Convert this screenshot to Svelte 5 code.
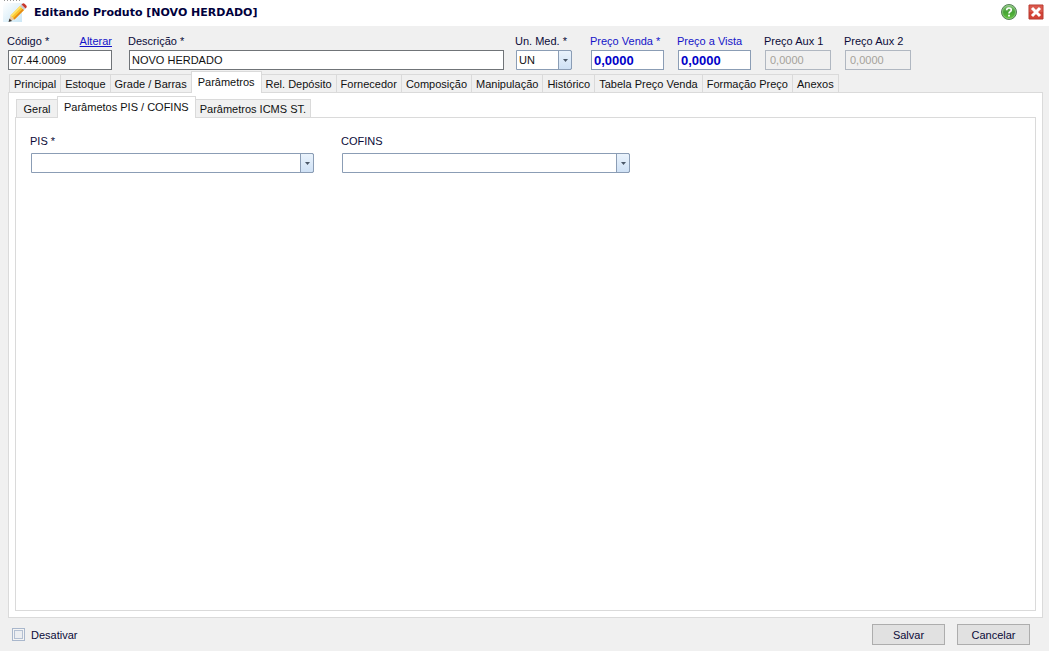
<script>
	const tabs = [
		"Principal",
		"Estoque",
		"Grade / Barras",
		"Parâmetros",
		"Rel. Depósito",
		"Fornecedor",
		"Composição",
		"Manipulação",
		"Histórico",
		"Tabela Preço Venda",
		"Formação Preço",
		"Anexos"
	];
	const subTabs = ["Geral", "Parâmetos PIS / COFINS", "Parâmetros ICMS ST."];

	let activeTab = $state("Parâmetros");
	let activeSubTab = $state("Parâmetos PIS / COFINS");
	let code = $state("07.44.0009");
	let description = $state("NOVO HERDADO");
	let unit = $state("UN");
	let salePrice = $state("0,0000");
	let cashPrice = $state("0,0000");
	let disabled = $state(false);
</script>

{#snippet tabList(items, active, select, label)}
	<div class="tabs" role="tablist" aria-label={label}>
		{#each items as item}
			<button
				type="button"
				role="tab"
				class="tab"
				class:active={item === active}
				aria-selected={item === active}
				onclick={() => select(item)}
			>{item}</button>
		{/each}
	</div>
{/snippet}

{#snippet arrow()}
	<span class="arrow" aria-hidden="true">
		<svg width="5" height="3" viewBox="0 0 5 3"><path d="M0 0h5L2.5 3z" fill="#4b5868" /></svg>
	</span>
{/snippet}

<form class="window" onsubmit={(event) => event.preventDefault()}>
	<header class="titlebar">
		<svg class="pencil" width="24" height="24" viewBox="0 0 24 24" aria-hidden="true">
			<defs>
				<linearGradient id="sky" x1="0" y1="0" x2="1" y2="1">
					<stop offset="0" stop-color="#fff" />
					<stop offset="0.5" stop-color="#e3f2fa" />
					<stop offset="1" stop-color="#cce7f5" />
				</linearGradient>
			</defs>
			<path d="M0 3h19v19H0z" fill="url(#sky)" />
			<path d="M1 .5h16" stroke="#999" stroke-dasharray="1 2" />
			<path d="M6 21.500L7.500 15.500 11.500 19.500z" fill="#edc9a0" />
			<path d="M5.500 22L6.500 18.500 9 21z" fill="#3c3835" />
			<path d="M7.500 15.500L17 6l4 4-9.500 9.500z" fill="#fcc62b" />
			<path d="M7.500 15.500L17 6l1.300 1.300-9.500 9.500z" fill="#ffe26b" />
			<path d="M10.300 18.300L19.800 8.800 21 10l-9.500 9.500z" fill="#e58a16" />
			<path d="M17 6l1.500-1.500 4 4L21 10z" fill="#c6cbd0" />
			<path d="M18.500 4.500l.8-.8q1.200-1 2.500.2l1.300 1.300q1.200 1.300.2 2.500l-.8.8z" fill="#c8382c" />
		</svg>
		<h1>Editando Produto [NOVO HERDADO]</h1>
		<button type="button" class="icon" aria-label="Ajuda">
			<svg width="16" height="16" viewBox="0 0 16 16">
				<defs>
					<linearGradient id="green" x1="0" y1="0" x2="0" y2="1">
						<stop offset="0" stop-color="#8cc47f" />
						<stop offset="0.5" stop-color="#45a335" />
						<stop offset="1" stop-color="#63c43d" />
					</linearGradient>
				</defs>
				<circle cx="8" cy="8" r="7.500" fill="url(#green)" stroke="#57805a" />
				<circle cx="8" cy="8" r="6.500" fill="none" stroke="#a5d69a" stroke-width=".6" />
				<path d="M5.700 6.200Q5.700 4 8 4t2.300 1.900Q10.300 7 9 7.700 8 8.200 8 9.500" fill="none" stroke="#fff" stroke-width="1.600" />
				<path d="M7.100 10.700h1.800v1.700H7.100z" fill="#fff" />
			</svg>
		</button>
		<button type="button" class="icon" aria-label="Fechar">
			<svg width="16" height="16" viewBox="0 0 16 16">
				<path d="M1 1h14v14H1z" fill="#d34336" stroke="#b53b30" />
				<path d="M1.500 1.500h13V8h-13z" fill="#da594d" />
				<path d="M4 4l8 8M12 4l-8 8" stroke="#fff" stroke-width="3" />
			</svg>
		</button>
	</header>

	<section class="fields">
		<div class="identity">
			<div class="field code">
				<div class="label-row">
					<label for="code">Código *</label>
					<a href="#alterar">Alterar</a>
				</div>
				<input id="code" bind:value={code} />
			</div>
			<div class="field description">
				<label for="description">Descrição *</label>
				<input id="description" bind:value={description} />
			</div>
		</div>
		<div class="field unit">
			<label for="unit">Un. Med. *</label>
			<div class="combo">
				<select id="unit" bind:value={unit}>
					<option>UN</option>
				</select>
				{@render arrow()}
			</div>
		</div>
		<div class="prices">
			<div class="field price">
				<label for="sale">Preço Venda *</label>
				<input id="sale" bind:value={salePrice} />
			</div>
			<div class="field price">
				<label for="cash">Preço a Vista</label>
				<input id="cash" bind:value={cashPrice} />
			</div>
			<div class="field aux">
				<label for="aux1">Preço Aux 1</label>
				<input id="aux1" value="0,0000" disabled />
			</div>
			<div class="field aux">
				<label for="aux2">Preço Aux 2</label>
				<input id="aux2" value="0,0000" disabled />
			</div>
		</div>
	</section>

	<main class="content">
		{@render tabList(tabs, activeTab, (item) => (activeTab = item), "Produto")}
		<div class="panel outer">
			{@render tabList(subTabs, activeSubTab, (item) => (activeSubTab = item), "Parâmetros")}
			<div class="panel inner">
				<div class="field pis">
					<label for="pis">PIS *</label>
					<div class="combo">
						<select id="pis"><option></option></select>
						{@render arrow()}
					</div>
				</div>
				<div class="field cofins">
					<label for="cofins">COFINS</label>
					<div class="combo">
						<select id="cofins"><option></option></select>
						{@render arrow()}
					</div>
				</div>
			</div>
		</div>
	</main>

	<footer class="footer">
		<label class="check">
			<input type="checkbox" bind:checked={disabled} />
			Desativar
		</label>
		<button type="submit" class="action">Salvar</button>
		<button type="button" class="action">Cancelar</button>
	</footer>
</form>

<style>
	:global(body) {
		margin: 0;
		background: #f0f0f0;
	}

	.window,
	.window :is(input, select, button) {
		box-sizing: border-box;
		font-family: "Liberation Sans", Arial, sans-serif;
		font-size: 11px;
	}

	.window {
		display: flex;
		flex-direction: column;
		min-height: 100vh;
		color: #0b0b38;
		background: #f0f0f0;
	}

	.titlebar {
		display: flex;
		align-items: center;
		box-sizing: border-box;
		height: 26px;
		padding: 0 5px 2px 3px;
		gap: 11px;
		background: #fff;
	}

	.pencil {
		align-self: flex-start;
		margin-right: -4px;
	}

	h1 {
		flex: 1;
		margin: 0;
		color: #00003c;
		font: bold 11px "DejaVu Sans", Verdana, sans-serif;
	}

	.icon {
		display: flex;
		padding: 0;
		border: 0;
		background: none;
	}

	.fields {
		display: flex;
		gap: 12px;
		padding: 8px 8px 1px;
	}

	.identity {
		display: flex;
		flex: 0 1 496px;
		gap: 17px;
	}

	.prices {
		display: flex;
		gap: 14px;
		margin-left: 7px;
	}

	.field {
		display: flex;
		flex-direction: column;
		gap: 2px;
	}

	.field label {
		line-height: 14px;
		margin-left: -1px;
		white-space: nowrap;
	}

	.label-row {
		display: flex;
		justify-content: space-between;
	}

	.label-row a {
		color: #1414c8;
		line-height: 14px;
	}

	.field input,
	select {
		width: 100%;
		height: 20px;
		padding: 0 2px;
		border: 1px solid #707478;
		border-radius: 0;
		background: #fff;
		color: #111;
	}

	.code {
		width: 104px;
		flex-shrink: 0;
	}

	.description {
		flex: 1;
	}

	.unit {
		width: 56px;
	}

	.price {
		width: 73px;
	}

	.price label {
		color: #1414c8;
	}

	.field.price input {
		border-color: #8b9db5;
		color: #0000c8;
		font-size: 13px;
		font-weight: bold;
	}

	.aux {
		width: 66px;
	}

	.field.aux input {
		padding: 0 4px;
		border-color: #b0b7c1;
		background: #f0f0f0;
		color: #a5a29a;
	}

	.combo {
		position: relative;
	}

	select {
		display: block;
		appearance: none;
		border-color: #8b9db5;
		border-radius: 0 2px 2px 0;
	}

	.arrow {
		position: absolute;
		inset: 0 0 0 auto;
		display: flex;
		align-items: center;
		justify-content: center;
		box-sizing: border-box;
		width: 14px;
		border: 1px solid #8b9db5;
		border-radius: 0 2px 2px 0;
		background: linear-gradient(#eaf3fc, #cfe1f5);
		pointer-events: none;
	}

	.content {
		display: flex;
		flex: 1;
		flex-direction: column;
		padding: 0 6px 0 8px;
	}

	.tabs {
		display: flex;
		align-items: flex-end;
		height: 21px;
		padding-left: 1px;
	}

	.tab {
		min-width: 42px;
		height: 18px;
		margin-left: -1px;
		padding: 0 4px;
		border: 1px solid #dadada;
		border-bottom: 0;
		background: #f0f0f0;
		color: #111;
		white-space: nowrap;
	}

	.tab:first-child {
		margin-left: 0;
	}

	.tab.active {
		z-index: 1;
		height: 22px;
		margin-bottom: -1px;
		padding: 0 6px 2px;
		background: #fff;
	}

	.panel {
		display: flex;
		flex: 1;
		border: 1px solid #dadada;
		background: #fff;
	}

	.outer {
		flex-direction: column;
		padding: 3px 6px 6px;
	}

	.inner {
		align-items: flex-start;
		gap: 28px;
		padding: 16px 15px;
	}

	.pis,
	.cofins {
		flex: 0 1 283px;
		gap: 5px;
	}

	.cofins {
		flex-basis: 288px;
	}

	.footer {
		display: flex;
		align-items: center;
		gap: 12px;
		padding: 6px 19px 6px 12px;
	}

	.check {
		display: flex;
		flex: 1;
		align-items: center;
		gap: 6px;
	}

	.check input {
		display: grid;
		place-items: center;
		width: 13px;
		height: 13px;
		margin: 0;
		appearance: none;
		border: 1px solid #a9b7cc;
		background: #f4f4f4;
	}

	.check input::before {
		content: "";
		width: 7px;
		height: 7px;
		border: 1px solid #b4c0d2;
		background: #eceef1;
	}

	.check input:checked::before {
		background: #4b5868;
	}

	.action {
		width: 73px;
		height: 21px;
		padding: 0;
		border: 1px solid #adadad;
		background: #e1e1e1;
		color: #0b0b38;
	}
</style>
